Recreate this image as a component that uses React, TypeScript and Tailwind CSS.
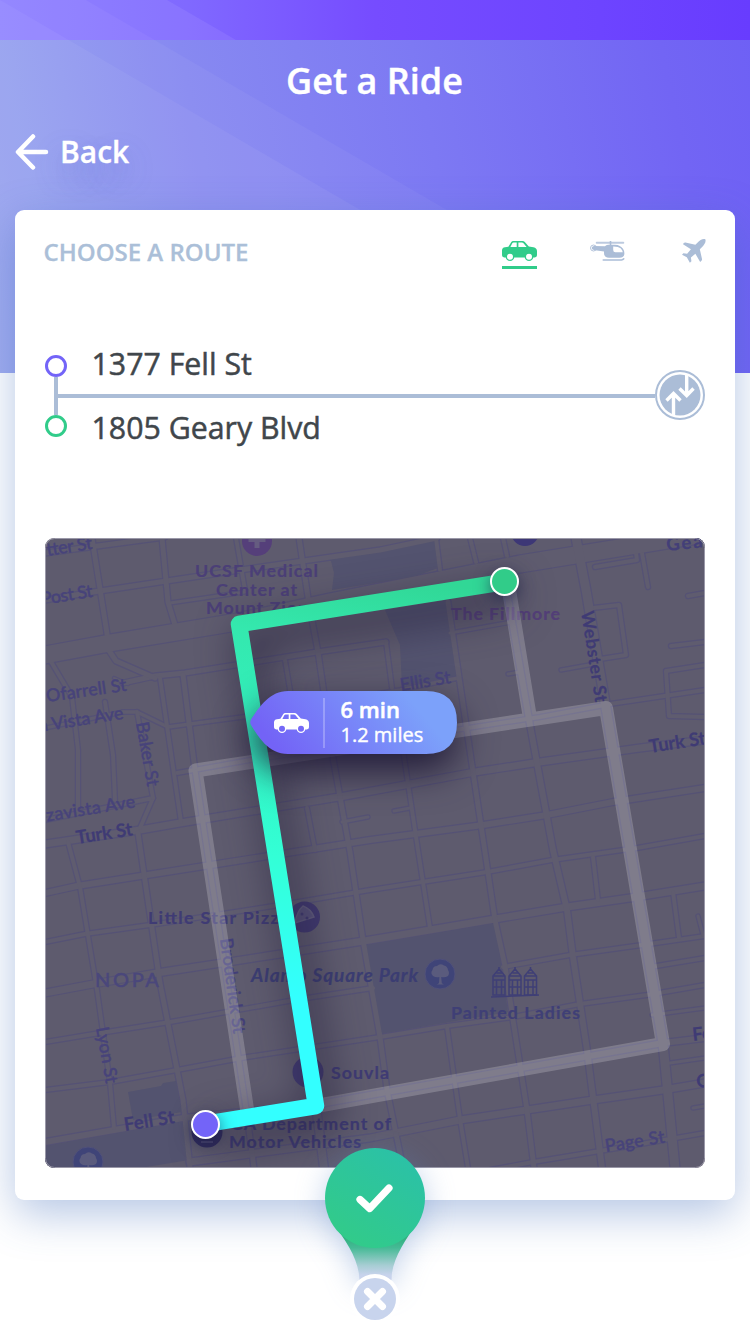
import React from "react";

const STREETS: { d: string; w: number }[] = [
  { d: "M45 553 L165 537", w: 5 },
  { d: "M45 600 L93 592 L240 570 L380 550 L437 538", w: 5 },
  { d: "M170 603 L245 592", w: 3 },
  { d: "M123 683 L155 676 L185 673 L317 652 L386 642", w: 5 },
  { d: "M108 649 L116 661 L155 678", w: 5 },
  { d: "M114 678 L128 684", w: 2 },
  { d: "M450 633 L512 622", w: 3 },
  { d: "M386 642 L392 688", w: 4 },
  { d: "M123 712 L137 712 L168 727 L250 716 L400 690 L458 678", w: 3.5 },
  { d: "M45 728 L123 712", w: 3 },
  { d: "M508 674 L520 672", w: 3 },
  { d: "M561 670 L600 663", w: 3 },
  { d: "M177 773 L250 760 L455 730 L540 717 L610 704 L705 690", w: 4 },
  { d: "M45 844 L140 830 L180 823 L345 796 L475 772 L540 762 L640 748 L705 740", w: 7 },
  { d: "M45 820 L153 798 L140 828", w: 4 },
  { d: "M45 893 L77 886 L147 875 L370 840 L483 825 L547 815 L613 802 L705 788", w: 6 },
  { d: "M45 942 L85 934 L150 925 L280 905 L370 890 L422 882 L487 872 L552 860 L637 848 L705 836", w: 4 },
  { d: "M45 993 L93 984 L163 972 L280 954 L370 940 L430 930 L495 919 L567 907 L630 898 L705 886", w: 7 },
  { d: "M45 1042 L100 1033 L170 1022 L300 999 L373 988", w: 4 },
  { d: "M503 967 L570 955 L635 946 L705 936", w: 4 },
  { d: "M45 1090 L110 1082 L177 1070 L247 1057 L380 1037 L447 1026 L513 1017 L580 1004 L647 995 L705 985", w: 4 },
  { d: "M45 1142 L183 1118 L320 1104 L370 1095 L663 1043 L705 1038", w: 6 },
  { d: "M190 1162 L257 1153 L370 1138 L460 1120 L527 1110 L593 1100 L663 1090 L705 1083", w: 7 },
  { d: "M490 1170 L533 1162 L600 1151 L705 1133", w: 4 },
  { d: "M650 967 L705 958", w: 4 },
  { d: "M652 1015 L705 1008", w: 3 },
  { d: "M663 1064 L705 1058", w: 3 },
  { d: "M92 538 L108 640", w: 5 },
  { d: "M162 538 L168 602 L175 625", w: 5 },
  { d: "M236 538 L245 590", w: 4 },
  { d: "M299 538 L309 604 L318 652 L325 700", w: 5 },
  { d: "M285 660 L292 702", w: 4 },
  { d: "M436 538 L440 570", w: 4 },
  { d: "M470 538 L476 562", w: 4 },
  { d: "M503 538 L507 556", w: 4 },
  { d: "M50 660 L72 697 L78 750 L78 812", w: 4 },
  { d: "M105 702 L113 755 L115 800", w: 4 },
  { d: "M137 712 L146 760 L153 798", w: 4 },
  { d: "M160 678 L181 822", w: 4 },
  { d: "M183 675 L195 770 L246 1108 L254 1168", w: 5 },
  { d: "M240 624 L316 1106 L324 1168", w: 8 },
  { d: "M68 842 L80 887 L97 990 L110 1083 L114 1128", w: 4 },
  { d: "M138 833 L160 983 L183 1100 L190 1168", w: 5 },
  { d: "M333 758 L350 852 L363 940 L380 1037 L387 1090 L403 1168", w: 5 },
  { d: "M307 808 L315 850", w: 4 },
  { d: "M342 822 L368 817", w: 3 },
  { d: "M394 811 L410 808", w: 3 },
  { d: "M403 750 L418 850 L430 928", w: 4 },
  { d: "M447 1027 L460 1119 L468 1168", w: 4 },
  { d: "M448 602 L473 772 L485 852 L495 920 L505 966 L513 1020 L527 1110 L534 1168", w: 5 },
  { d: "M508 598 L530 725 L553 850 L567 910 L573 957 L587 1050 L602 1168", w: 6 },
  { d: "M593 857 L598 900", w: 4 },
  { d: "M673 892 L679 938", w: 4 },
  { d: "M593 608 L619 605 L626 655 L600 659", w: 4 },
  { d: "M642 553 L648 587", w: 4 },
  { d: "M688 596 L705 593", w: 4 },
  { d: "M671 646 L705 642", w: 4 },
  { d: "M705 665 L666 671 L669 716 L705 717", w: 4 },
  { d: "M595 567 L637 560 L636 553", w: 4 },
  { d: "M693 1108 L705 1106", w: 3 },
  { d: "M698 916 L703 935", w: 3 },
  { d: "M45 655 L110 643 L237 622 L330 602 L520 564 L705 534", w: 17 },
  { d: "M576 538 L586 590 L606 708 L663 1043 L675 1168", w: 9 },
];

const LABELS: {
  t: string;
  x: number;
  y: number;
  r?: number;
  len?: number;
  c?: string;
  s?: number;
  wt?: number;
  it?: boolean;
}[] = [
  { t: "tter St", x: 47, y: 556, r: -9, len: 46, c: "#47437a" },
  { t: "Post St", x: 42, y: 605, r: -9, len: 52, c: "#47437a" },
  { t: "UCSF Medical", x: 195, y: 577, len: 123, c: "#4b3f77", wt: 700 },
  { t: "Center at", x: 216, y: 595.5, len: 81, c: "#4b3f77", wt: 700 },
  { t: "Mount Zion", x: 206, y: 614, len: 102, c: "#4b3f77", wt: 700 },
  { t: "The Fillmore", x: 451, y: 620, len: 109, c: "#533f78", wt: 700 },
  { t: "Gear", x: 667, y: 551, r: -6, len: 45, c: "#433f78", wt: 700, s: 18.5 },
  { t: "Webster St", x: 581, y: 612, r: 81, len: 92, c: "#3f3b74", wt: 700 },
  { t: "Ofarrell St", x: 47, y: 702, r: -8, len: 81, c: "#47437a" },
  { t: "a Vista Ave", x: 40, y: 732, r: -9, len: 85, c: "#47437a" },
  { t: "Baker St", x: 136, y: 723, r: 80, len: 65, c: "#47437a" },
  { t: "nzavista Ave", x: 37, y: 823, r: -9, len: 100, c: "#47437a" },
  { t: "Turk St", x: 77, y: 844, r: -9, len: 57, c: "#3f3b74", wt: 700, s: 18.5 },
  { t: "Turk St", x: 650, y: 753, r: -9, len: 57, c: "#3f3b74", wt: 700, s: 18.5 },
  { t: "Ellis St", x: 401, y: 691, r: -9, len: 51, c: "#47437a" },
  { t: "Little Star Pizza", x: 148, y: 924, len: 141, c: "#3f3b74", wt: 700 },
  { t: "Alamo Square Park", x: 251, y: 981.5, len: 167, c: "#3b3d72", wt: 700, s: 19, it: true },
  { t: "NOPA", x: 95, y: 987, len: 64, c: "#4a477b", s: 20 },
  { t: "Broderick St", x: 220, y: 939, r: 82, len: 96, c: "#423e78" },
  { t: "Lyon St", x: 96, y: 1028, r: 80, len: 57, c: "#47437a" },
  { t: "Fell St", x: 125, y: 1131, r: -9, len: 51, c: "#3f3b74", wt: 700, s: 18.5 },
  { t: "Souvla", x: 331, y: 1079, len: 58, c: "#3f3b74", wt: 700 },
  { t: "CA Department of", x: 231, y: 1130, len: 160, c: "#3d3a72", wt: 700 },
  { t: "Motor Vehicles", x: 229, y: 1148, len: 132, c: "#3d3a72", wt: 700 },
  { t: "Painted Ladies", x: 451, y: 1019, len: 129, c: "#3f3f76", wt: 700 },
  { t: "Page St", x: 606, y: 1152, r: -9, len: 60, c: "#47437a" },
  { t: "Fell", x: 693, y: 1041, r: -6, c: "#3f3b74", wt: 700, s: 18.5 },
  { t: "Oak", x: 697, y: 1088, r: -6, c: "#3f3b74", wt: 700, s: 18.5 },
];

function Car({ className, hub }: { className?: string; hub: string }) {
  return (
    <svg viewBox="0 0 35 20" className={className} fill="currentColor">
      <path
        fillRule="evenodd"
        d="M3 6.200 L6.400 5.800 L9 1.400 Q9.800 0 11.400 0 H20.400 Q22 0 22.800 1 L26.800 5.600 L31.500 6.200 Q35 7 35 10.200 V14.300 Q35 16.400 32.800 16.400 H2.200 Q0 16.400 0 14.300 V9.400 Q0 6.600 3 6.200 Z M8.400 5.900 H14.700 V1.500 H11.600 Q10.800 1.500 10.300 2.300 Z M16.400 5.900 H24.600 L21.500 2.200 Q20.900 1.500 19.900 1.500 H16.400 Z"
      />
      <circle cx="8" cy="15.700" r="4.300" />
      <circle cx="27" cy="15.700" r="4.300" />
      <circle cx="8" cy="15.700" r="3" fill={hub} />
      <circle cx="27" cy="15.700" r="3" fill={hub} />
    </svg>
  );
}

function Helicopter({ className }: { className?: string }) {
  return (
    <svg viewBox="0 0 35 20" className={className} fill="currentColor">
      <rect x="5.800" y="0.700" width="28.400" height="2" rx="0.800" opacity="0.8" />
      <rect x="19.700" y="0" width="1.600" height="5" />
      <circle cx="3.500" cy="7" r="3" fill="none" stroke="currentColor" strokeWidth="0.900" />
      <circle cx="3.500" cy="7" r="1.700" />
      <path
        fillRule="evenodd"
        d="M3.500 5 L15 5.300 Q16 3.700 18 3.700 H25 Q30.500 4 33 7.800 Q34.400 10 34.400 12.200 Q34.400 16.800 29.500 16.800 H19 Q14 16.600 14 12 V10.400 L3.500 8.900 Z M23.200 5.400 V9 Q23.200 11.200 25.400 11.200 H32.800 Q32.600 9 30.600 7.200 Q28.300 5.300 23.200 5.400 Z"
      />
      <path d="M13.200 18.900 H31.500 Q33 18.900 33.800 17.800" fill="none" stroke="currentColor" strokeWidth="1.500" strokeLinecap="round" />
    </svg>
  );
}

function Plane({ className }: { className?: string }) {
  return (
    <svg viewBox="576 42 70 70" className={className} fill="currentColor">
      <path d="M644 43 C637 40 628 46 621 53 L615 59 L586 52 Q583 51.500 581 54 L579 57 L602 72 L591 85 L580 83.500 L576 88 L590 95 L599 111 L603.500 107 L602 96 L615 85 L629 109 L632 106 Q635 104 634.500 101 L628 72 L634 66 C641 59 647 50 644 43 Z" />
    </svg>
  );
}

function TreeBadge({ x, y }: { x: number; y: number }) {
  return (
    <g>
      <circle cx={x} cy={y} r="15" fill="#3f4478" stroke="#51517a" />
      <path
        transform={`translate(${x} ${y})`}
        d="M-1 9 L-.6 3 Q-4 4 -7 2 Q-10 -1 -7.500 -4 Q-7 -8 -3 -8 Q0 -11 4 -8.500 Q7.500 -8 8 -4 Q10 -1 8 2 Q5 4 1.200 3 L1.800 9 Q3 10 4 10.500 H-3.500 Q-2 10 -1 9 Z"
        fill="#5a5b7d"
      />
    </g>
  );
}

function House({ x }: { x: number }) {
  return (
    <g transform={`translate(${x} 968)`} fill="none" stroke="#3f3f76" strokeWidth="1.500">
      <path d="M1 8 L7 1 L13 8 V27 H1 Z M1 8 H13 M1 12 H13 M1 19 H13 M4.500 12 V27 M9.500 12 V27 M4.500 5 H10 M7 -1 V3" />
    </g>
  );
}

function RouteMap() {
  return (
    <svg viewBox="45 538 660 630" className="block h-[630px] w-[660px]">
      <defs>
        <linearGradient id="route" gradientUnits="userSpaceOnUse" x1="400" y1="575" x2="300" y2="1110">
          <stop offset="0" stopColor="#31d796" />
          <stop offset="0.15" stopColor="#34e8ae" />
          <stop offset="0.35" stopColor="#32f2c0" />
          <stop offset="0.55" stopColor="#33ffd6" />
          <stop offset="0.8" stopColor="#33ffff" />
          <stop offset="1" stopColor="#33ffff" />
        </linearGradient>
        <linearGradient id="pill" gradientUnits="userSpaceOnUse" x1="290" y1="765" x2="395" y2="680">
          <stop offset="0" stopColor="#7363f6" />
          <stop offset="1" stopColor="#7ca1fa" />
        </linearGradient>
        <filter id="routeShadow" filterUnits="userSpaceOnUse" x="45" y="538" width="660" height="630" colorInterpolationFilters="sRGB">
          <feDropShadow dx="8" dy="14" stdDeviation="20" floodColor="#221c38" floodOpacity="0.95" />
        </filter>
        <filter id="pillShadow" filterUnits="userSpaceOnUse" x="130" y="600" width="460" height="300" colorInterpolationFilters="sRGB">
          <feDropShadow dx="0" dy="16" stdDeviation="19" floodColor="#1d1735" floodOpacity="0.95" />
        </filter>
        <filter id="dotShadow" filterUnits="userSpaceOnUse" x="45" y="538" width="660" height="630" colorInterpolationFilters="sRGB">
          <feDropShadow dx="0" dy="5" stdDeviation="8" floodColor="#1b2048" floodOpacity="0.65" />
        </filter>
        <clipPath id="mapClip">
          <rect x="45" y="538" width="660" height="630" rx="9" />
        </clipPath>
      </defs>
      <g clipPath="url(#mapClip)">
        <rect x="45" y="538" width="660" height="630" fill="#5e5b6e" />
        <g fill="none" stroke="#555275" strokeLinejoin="round" strokeLinecap="round">
          {STREETS.map((s, i) => (
            <path key={i} d={s.d} strokeWidth={s.w + 2.4} />
          ))}
        </g>
        <g fill="#53536f">
          <path d="M330 557 L435 540 L438 568 L413 577 L332 590 L334 573 Z" />
          <path d="M385 610 L447 600 L456 676 L402 686 L400 645 Z" />
          <path d="M366 945 L495 923 L508 1012 L380 1034 Z" />
          <path d="M45 1146 L184 1121 L189 1160 L140 1168 H45 Z" />
          <path d="M128 1092 L161 1086 L163 1083 L176 1081 L182 1112 L133 1120 Z" />
        </g>
        <g fill="none" stroke="#5f5c6f" strokeLinejoin="round" strokeLinecap="round">
          {STREETS.map((s, i) => (
            <path key={i} d={s.d} strokeWidth={s.w} />
          ))}
        </g>
        <circle cx="257" cy="541" r="15" fill="#553f7a" />
        <path d="M254.500 531 h5 v6 h6 v5 h-6 v6 h-5 v-6 h-6 v-5 h6 z" fill="#655c80" />
        <circle cx="525" cy="532" r="14" fill="#3d3776" />
        <circle cx="304.500" cy="917" r="15.500" fill="#40396f" />
        <path d="M295 923 Q297 911 303 906 Q311 909 314 917 Z" fill="#565179" stroke="#605c7c" strokeWidth="1.500" />
        <circle cx="302" cy="914" r="1.500" fill="#403a70" />
        <circle cx="307" cy="918" r="1.500" fill="#403a70" />
        <circle cx="308" cy="1072" r="15.500" fill="#403a70" />
        <circle cx="207" cy="1132" r="15.500" fill="#302b5c" />
        <path d="M201 1142 H213" stroke="#555178" strokeWidth="1.500" />
        <TreeBadge x={440} y={974} />
        <TreeBadge x={88} y={1162} />
        <House x={492} />
        <House x={508} />
        <House x={523.5} />
        <path d="M491 997 L539 995" stroke="#3f3f76" strokeWidth="1.500" />
        <g style={{ fontFamily: "Lato, 'Noto Sans', sans-serif" }}>
          {LABELS.map((l, i) => (
            <text
              key={i}
              transform={`translate(${l.x} ${l.y}) rotate(${l.r ?? 0})`}
              fill={l.c}
              fontSize={l.s ?? 17.8}
              fontWeight={l.wt ?? 500}
              fontStyle={l.it ? "italic" : "normal"}
              textLength={l.len}
              stroke={l.c}
              strokeWidth={l.wt ? 0.2 : 0.4}
            >
              {l.t}
            </text>
          ))}
        </g>
        <path
          d="M509 590 L530 718 M247 1109 L195.500 770.500 L606 708 L663 1044 L316 1106"
          fill="none"
          stroke="#fff"
          strokeOpacity="0.2"
          strokeWidth="14"
          strokeLinejoin="round"
        />
        <path
          d="M504 582 L239 624 L316 1106 L205 1124"
          fill="none"
          stroke="url(#route)"
          strokeWidth="16.500"
          strokeLinejoin="round"
          filter="url(#routeShadow)"
        />
        <circle cx="504.500" cy="581.500" r="13.500" fill="#31cc89" stroke="#fff" strokeWidth="2" filter="url(#dotShadow)" />
        <circle cx="205.500" cy="1124.500" r="13.500" fill="#7364f8" stroke="#fff" strokeWidth="2" filter="url(#dotShadow)" />
        <path
          d="M251 719.500 Q249.500 722.500 251 725 C258 736 268 754 288 754 H426 Q457 754 457 722.500 Q457 691 426 691 H288 C270 691 260 706 251 719.500 Z"
          fill="url(#pill)"
          filter="url(#pillShadow)"
        />
        <rect x="45.500" y="538.500" width="659" height="629" rx="9" fill="none" stroke="#9a98a8" />
      </g>
    </svg>
  );
}

export default function App() {
  return (
    <div className="relative h-[1334px] w-[750px] overflow-hidden bg-white font-['Open_Sans','Noto_Sans',sans-serif]">
      <div className="absolute inset-x-0 top-0 h-[373px] bg-[linear-gradient(78deg,#97a5ef_0%,#8789f1_30%,#7d79f3_58%,#7265f4_88%,#6e60f5_100%)]">
        <div className="h-10 bg-[linear-gradient(90deg,#877aff_0%,#8069ff_25%,#764cff_50%,#6d44ff_80%,#683cfe_100%)]" />
        <svg viewBox="0 0 750 373" className="absolute inset-0 h-full w-full" fill="#fff">
          <path d="M0 0 L640 373 H0 Z" fillOpacity="0.05" />
          <path d="M0 0 H86 L727 373 H0 Z" fillOpacity="0.045" />
          <path d="M0 0 H167 L236 40 H0 Z" fillOpacity="0.07" />
        </svg>
      </div>

      <div className="relative flex h-full flex-col px-[15px]">
        <h1 className="mt-[56px] -ml-[1px] text-center text-[36px] leading-[50px] font-semibold text-white [-webkit-text-stroke:0.4px_white]">Get a Ride</h1>
        <button className="mt-[22px] flex h-12 items-center self-start text-white">
          <svg viewBox="0 0 34 38" className="h-[38px] w-[34px]" fill="none" stroke="#fff" strokeWidth="4.500" strokeLinecap="round" strokeLinejoin="round">
            <path d="M31 19 H4 M18 3.500 L3 19 L18 34.500" />
          </svg>
          <span className="ml-[11px] text-[30px] leading-[40px] font-semibold [-webkit-text-stroke:0.3px_white] [text-shadow:0_14px_28px_rgba(80,100,200,0.35)]">Back</span>
        </button>

        <main className="mt-[34px] h-[990px] shrink-0 rounded-[9px] bg-white shadow-[0_14px_44px_rgba(60,105,185,0.38)]">
          <div className="flex h-[84px] items-center justify-between pr-[29px] pl-[28.5px]">
            <h2 className="text-[24px] font-semibold text-[#abbfd8] [-webkit-text-stroke:0.3px_#abbfd8]">CHOOSE A ROUTE</h2>
            <nav className="-mt-[2px] flex h-5 items-start text-[#abbdd7]">
              <div className="flex flex-col gap-[5px] text-[#31cc8a]">
                <Car className="h-5 w-[35px]" hub="#fff" />
                <div className="h-[3px] bg-[#31cc8a]" />
              </div>
              <Helicopter className="ml-[53px] h-5 w-[35px]" />
              <Plane className="-mt-[2px] ml-[57px] h-6 w-6" />
            </nav>
          </div>

          <section className="mt-[37px] flex h-[130px] items-center pl-[30px]">
            <div className="-mt-[1px] flex h-[82px] w-[22px] flex-col items-center">
              <div className="h-[22px] w-[22px] shrink-0 rounded-full border-[3px] border-[#7364f8]" />
              <div className="w-1 flex-1 bg-[#abbdd7]" />
              <div className="h-[22px] w-[22px] shrink-0 rounded-full border-[3px] border-[#31cc8a]" />
            </div>
            <div className="-ml-[9px] flex flex-1 flex-col text-[30.3px] leading-[45px] text-[#40464b] [-webkit-text-stroke:0.5px_#40464b]">
              <div className="flex h-[53px] items-start pl-[33.5px]">1377 Fell St</div>
              <div className="h-1 bg-[#abbdd7]" />
              <div className="flex h-[53px] items-end pb-[1px] pl-[33.5px]">1805 Geary Blvd</div>
            </div>
            <svg viewBox="655 370 50 50" className="-mt-[2px] mr-[30px] h-[50px] w-[50px]" fill="none" stroke="#fff" strokeWidth="3.400">
              <circle cx="680" cy="395" r="24" fill="#fff" stroke="#abbdd7" strokeWidth="2" />
              <circle cx="680" cy="395" r="20.500" fill="#abbdd7" stroke="none" />
              <path d="M673.500 394 V415 M666.500 400.500 L673.500 393.500 L680.500 400.500 M686.700 375 V396 M679.500 388.500 L686.700 395.500 L693.500 388.500" />
            </svg>
          </section>

          <section className="relative mt-[77px] ml-[30px] w-[660px]">
            <RouteMap />
            <div className="absolute top-[153px] left-[205px] flex h-[63px] w-[207px] items-center text-white">
              <Car className="ml-[24px] h-5 w-[35px]" hub="#7468f7" />
              <div className="ml-[14px] h-[50px] w-[2px] bg-white/25" />
              <div className="-mt-[2px] ml-[15.5px]">
                <div className="text-[22px] leading-[26px] font-semibold [-webkit-text-stroke:0.5px_white]">6 min</div>
                <div className="text-[20px] leading-[26px] [-webkit-text-stroke:0.4px_white]">1.2 miles</div>
              </div>
            </div>
          </section>
        </main>
      </div>

      <svg viewBox="275 1130 200 204" className="absolute top-[1130px] left-[275px] h-[204px] w-[200px]">
        <defs>
          <linearGradient id="ok" x1="0.2" y1="0.95" x2="0.8" y2="0.05">
            <stop offset="0" stopColor="#32cb89" />
            <stop offset="1" stopColor="#2bc1a7" />
          </linearGradient>
          <linearGradient id="neck" gradientUnits="userSpaceOnUse" x1="0" y1="1236" x2="0" y2="1275">
            <stop offset="0" stopColor="#2fae7c" />
            <stop offset="0.3" stopColor="#45ba95" />
            <stop offset="0.75" stopColor="#a6cdd3" />
            <stop offset="1" stopColor="#c8d3ec" />
          </linearGradient>
          <filter id="okShadow" filterUnits="userSpaceOnUse" x="275" y="1130" width="200" height="204" colorInterpolationFilters="sRGB">
            <feDropShadow dx="0" dy="6" stdDeviation="15" floodColor="#5b86c8" floodOpacity="0.38" />
          </filter>
        </defs>
        <g filter="url(#okShadow)">
          <path d="M337 1229 C349 1245 359 1262 359.500 1280 H391.500 C391.500 1262 402 1245 413 1229 Z" fill="url(#neck)" />
          <circle cx="375" cy="1198" r="50" fill="url(#ok)" />
        </g>
        <circle cx="375" cy="1299" r="25" fill="#fff" />
        <circle cx="375" cy="1299" r="21" fill="#c8d4ed" />
        <g fill="none" stroke="#fff" strokeLinecap="round" strokeLinejoin="round">
          <path d="M360 1199.500 L369.700 1208.500 L389 1188" strokeWidth="7.200" />
          <path d="M367.500 1291.500 L382.500 1306.500 M382.500 1291.500 L367.500 1306.500" strokeWidth="7" />
        </g>
      </svg>
    </div>
  );
}
